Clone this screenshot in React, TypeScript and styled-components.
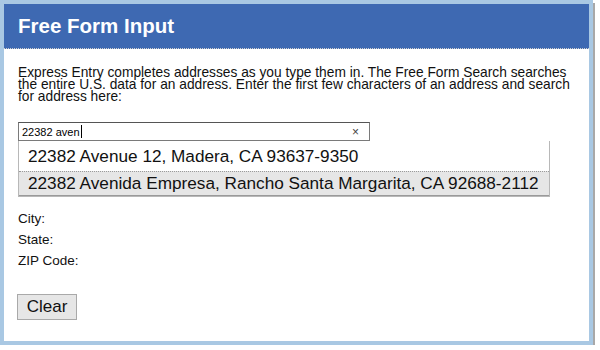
import React from "react";
import styled, { createGlobalStyle } from "styled-components";

const Global = createGlobalStyle`
  html, body { margin: 0; padding: 0; background: #ffffff; }
  body { font-family: "Liberation Sans", Arial, sans-serif; }
`;

const Frame = styled.div`
  box-sizing: border-box;
  width: 593px;
  height: 345px;
  border: 4px solid #a9c8e3;
  background: #ffffff;
  box-shadow: 2px 3px 0 #a8a8a8;
  display: flex;
  flex-direction: column;
`;

const Header = styled.div`
  height: 44px;
  background: #3e69b2;
  border-bottom: 1px dotted #d0d0d0;
  display: flex;
  align-items: center;
  padding-left: 14px;
`;

const Title = styled.h1`
  margin: 0;
  font-size: 20.5px;
  font-weight: bold;
  color: #ffffff;
`;

const Body = styled.div`
  padding: 18px 14px 0 14px;
  display: flex;
  flex-direction: column;
  align-items: flex-start;
`;

const Intro = styled.p`
  margin: 0;
  font-size: 13.75px;
  line-height: 12px;
  color: #111;
  white-space: nowrap;
`;

const SearchWrap = styled.div`
  position: relative;
  margin-top: 19px;
`;

const Input = styled.div`
  box-sizing: border-box;
  width: 352px;
  height: 19px;
  border: 1px solid #7a7a7a;
  border-top-color: #555;
  display: flex;
  align-items: center;
  padding: 0 4px 0 3px;
  font-size: 11px;
  color: #000;
`;

const Caret = styled.span`
  display: inline-block;
  width: 1px;
  height: 13px;
  background: #000;
  margin-left: 1px;
`;

const ClearX = styled.span`
  margin-left: auto;
  margin-right: 6px;
  font-size: 12px;
  color: #444;
`;

const Menu = styled.div`
  position: absolute;
  left: 0;
  top: 19px;
  box-sizing: border-box;
  width: 532px;
  border: 1px solid #b8b8b8;
  border-top: none;
  background: #fff;
`;

const Item = styled.div<{ $active?: boolean }>`
  box-sizing: border-box;
  height: ${(p) => (p.$active ? "25px" : "30px")};
  display: flex;
  align-items: center;
  padding-left: 9px;
  font-size: 17.2px;
  color: #111;
  white-space: nowrap;
  background: ${(p) => (p.$active ? "#e6e6e6" : "#ffffff")};
  border-top: ${(p) => (p.$active ? "1px dotted #9a9a9a" : "none")};
  border-bottom: ${(p) => (p.$active ? "1px solid #9a9a9a" : "none")};
`;

const Fields = styled.div`
  margin-top: 67px;
  display: flex;
  flex-direction: column;
`;

const Field = styled.div`
  font-size: 13.5px;
  line-height: 21px;
  color: #111;
`;

const Button = styled.button`
  margin-top: 23px;
  margin-left: -1px;
  box-sizing: border-box;
  width: 60px;
  height: 26px;
  padding: 0;
  background: #e6e6e6;
  border: 1px solid #a9a9a9;
  border-radius: 0;
  font-family: "Liberation Sans", Arial, sans-serif;
  font-size: 17px;
  color: #111;
`;

export default function App() {
  return (
    <>
      <Global />
      <Frame>
        <Header>
          <Title>Free Form Input</Title>
        </Header>
        <Body>
          <Intro>
            Express Entry completes addresses as you type them in. The Free Form Search searches
            <br />
            the entire U.S. data for an address. Enter the first few characters of an address and search
            <br />
            for address here:
          </Intro>
          <SearchWrap>
            <Input>
              22382 aven<Caret />
              <ClearX>×</ClearX>
            </Input>
            <Menu>
              <Item>22382 Avenue 12, Madera, CA 93637-9350</Item>
              <Item $active>22382 Avenida Empresa, Rancho Santa Margarita, CA 92688-2112</Item>
            </Menu>
          </SearchWrap>
          <Fields>
            <Field>City:</Field>
            <Field>State:</Field>
            <Field>ZIP Code:</Field>
          </Fields>
          <Button>Clear</Button>
        </Body>
      </Frame>
    </>
  );
}
